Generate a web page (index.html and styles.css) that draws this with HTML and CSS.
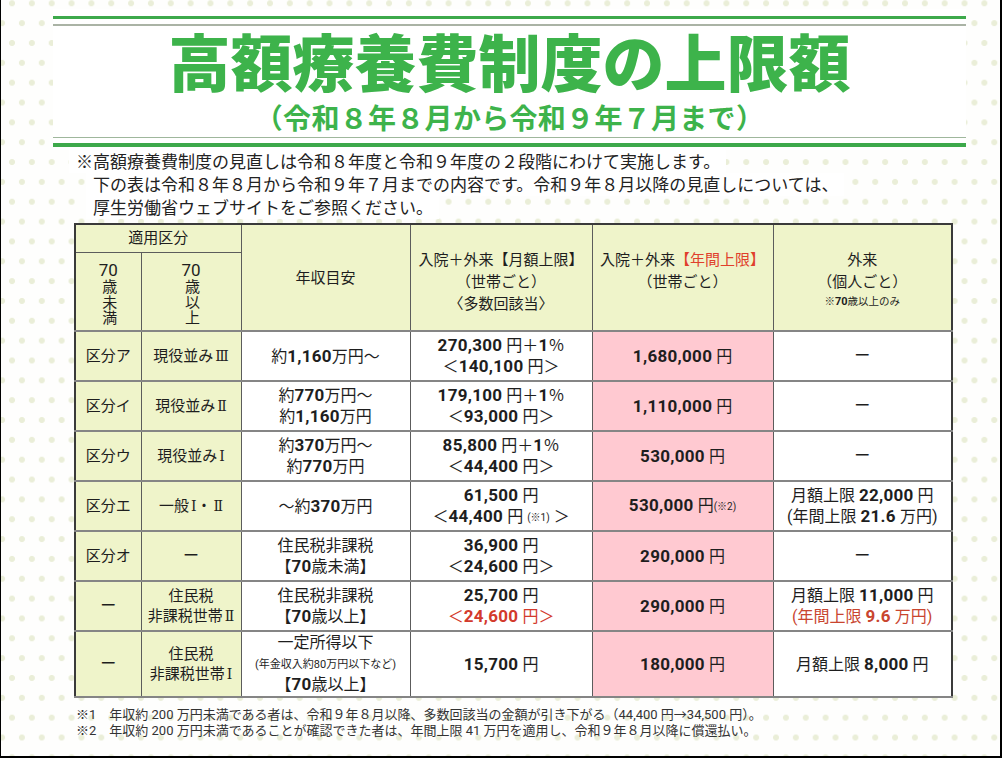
FILE: index.html
```html
<!DOCTYPE html>
<html lang="ja">
<head>
<meta charset="utf-8">
<title>高額療養費制度の上限額</title>
<link rel="stylesheet" href="styles.css">
</head>
<body>
<div class="page">
  <header class="banner">
    <div class="rule rule-green3"></div>
    <div class="rule rule-gray2"></div>
    <h1 class="title">高額療養費制度の上限額</h1>
    <p class="subtitle">（令和８年８月から令和９年７月まで）</p>
    <div class="rule rule-gray1"></div>
    <div class="rule rule-green4"></div>
  </header>

  <div class="intro">
    <p class="intro-line first">※高額療養費制度の見直しは令和８年度と令和９年度の２段階にわけて実施します。</p>
    <p class="intro-line">下の表は令和８年８月から令和９年７月までの内容です。令和９年８月以降の見直しについては、</p>
    <p class="intro-line">厚生労働省ウェブサイトをご参照ください。</p>
  </div>

  <table class="limits">
    <colgroup>
      <col class="c1"><col class="c2"><col class="c3"><col class="c4"><col class="c5"><col class="c6">
    </colgroup>
    <thead>
      <tr class="h1row">
        <th class="y" colspan="2">適用区分</th>
        <th class="y mid" rowspan="2">年収目安</th>
        <th class="y top" rowspan="2">入院＋外来【月額上限】<br>（世帯ごと）<br>〈多数回該当〉</th>
        <th class="y top" rowspan="2">入院＋外来<span class="red-h">【年間上限】</span><br>（世帯ごと）</th>
        <th class="y top" rowspan="2">外来<br>（個人ごと）<br><span class="tiny">※<b>70</b>歳以上のみ</span></th>
      </tr>
      <tr class="h2row">
        <th class="y vert"><span class="v70">70</span><span class="vtext">歳未満</span></th>
        <th class="y vert"><span class="v70">70</span><span class="vtext">歳以上</span></th>
      </tr>
    </thead>
    <tbody>
      <tr class="row">
        <td class="y k">区分ア</td>
        <td class="y k">現役並み<span class="rn">Ⅲ</span></td>
        <td>約<b class="n">1,160</b>万円～</td>
        <td><b class="n">270,300</b> 円＋<b class="n">1</b>％<br>＜<b class="n">140,100</b> 円＞</td>
        <td class="p"><b class="n">1,680,000</b> 円</td>
        <td><span class="dash">ー</span></td>
      </tr>
      <tr class="row">
        <td class="y k">区分イ</td>
        <td class="y k">現役並み<span class="rn">Ⅱ</span></td>
        <td>約<b class="n">770</b>万円～<br>約<b class="n">1,160</b>万円</td>
        <td><b class="n">179,100</b> 円＋<b class="n">1</b>％<br>＜<b class="n">93,000</b> 円＞</td>
        <td class="p"><b class="n">1,110,000</b> 円</td>
        <td><span class="dash">ー</span></td>
      </tr>
      <tr class="row">
        <td class="y k">区分ウ</td>
        <td class="y k">現役並み<span class="rn">Ⅰ</span></td>
        <td>約<b class="n">370</b>万円～<br>約<b class="n">770</b>万円</td>
        <td><b class="n">85,800</b> 円＋<b class="n">1</b>％<br>＜<b class="n">44,400</b> 円＞</td>
        <td class="p"><b class="n">530,000</b> 円</td>
        <td><span class="dash">ー</span></td>
      </tr>
      <tr class="row">
        <td class="y k">区分エ</td>
        <td class="y k">一般<span class="rn">Ⅰ</span>・<span class="rn">Ⅱ</span></td>
        <td>～約<b class="n">370</b>万円</td>
        <td><b class="n">61,500</b> 円<br>＜<b class="n">44,400</b> 円 <span class="mark">(※1)</span> ＞</td>
        <td class="p"><b class="n">530,000</b> 円<span class="mark">(※2)</span></td>
        <td>月額上限 <b class="n">22,000</b> 円<br>(年間上限 <b class="n">21.6</b> 万円)</td>
      </tr>
      <tr class="row">
        <td class="y k">区分オ</td>
        <td class="y k"><span class="dash">ー</span></td>
        <td>住民税非課税<br>【<b class="n">70</b>歳未満】</td>
        <td><b class="n">36,900</b> 円<br>＜<b class="n">24,600</b> 円＞</td>
        <td class="p"><b class="n">290,000</b> 円</td>
        <td><span class="dash">ー</span></td>
      </tr>
      <tr class="row">
        <td class="y k"><span class="dash">ー</span></td>
        <td class="y k">住民税<br>非課税世帯<span class="rn">Ⅱ</span></td>
        <td>住民税非課税<br>【<b class="n">70</b>歳以上】</td>
        <td><b class="n">25,700</b> 円<br><span class="red">＜<b class="n">24,600</b> 円＞</span></td>
        <td class="p"><b class="n">290,000</b> 円</td>
        <td>月額上限 <b class="n">11,000</b> 円<br><span class="red2">(年間上限 <b class="n">9.6</b> 万円)</span></td>
      </tr>
      <tr class="row last">
        <td class="y k"><span class="dash">ー</span></td>
        <td class="y k">住民税<br>非課税世帯<span class="rn">Ⅰ</span></td>
        <td>一定所得以下<br><span class="small">(年金収入約80万円以下など)</span><br>【<b class="n">70</b>歳以上】</td>
        <td><b class="n">15,700</b> 円</td>
        <td class="p"><b class="n">180,000</b> 円</td>
        <td>月額上限 <b class="n">8,000</b> 円</td>
      </tr>
    </tbody>
  </table>

  <div class="notes">
    <p>※1　年収約 200 万円未満である者は、令和９年８月以降、多数回該当の金額が引き下がる（44,400 円→34,500 円）。</p>
    <p>※2　年収約 200 万円未満であることが確認できた者は、年間上限 41 万円を適用し、令和９年８月以降に償還払い。</p>
  </div>
</div>
</body>
</html>
```

FILE: styles.css
```css
* { box-sizing: border-box; }

html, body {
  margin: 0;
  padding: 0;
}

body {
  font-family: "Noto Sans CJK JP", "Noto Sans", sans-serif;
  color: #1e1e1e;
  background: #ffffff;
}

.page {
  width: 1002px;
  height: 758px;
  border-left: 1px solid #000;
  border-right: 2px solid #000;
  border-bottom: 2px solid #000;
  padding-top: 9px;
  overflow: hidden;
  background-color: #fefefd;
  background-image:
    radial-gradient(circle, #eaeed8 2.7px, rgba(234,238,216,0) 3.3px),
    radial-gradient(circle, #eaeed8 2.7px, rgba(234,238,216,0) 3.3px);
  background-size: 19.85px 39.7px;
  background-position: 1.1px -16.55px, -8.85px 3.3px;
}

/* ---------- banner ---------- */
.banner {
  margin-left: 52px;
  width: 913px;
  background: #ffffff;
  padding: 7px 0 3px;
  font-family: "Roboto", "Noto Sans CJK JP", sans-serif;
}

.rule { width: 100%; }
.rule-green3 { height: 3px; background: #3da94b; }
.rule-gray2 { height: 2px; background: #aab3a5; margin-top: 5px; }
.rule-gray1 { height: 1px; background: #9fb79c; }
.rule-green4 { height: 4px; background: #3da94b; margin-top: 5px; }

.title {
  margin: 6px 0 0;
  font-size: 62px;
  line-height: 68px;
  font-weight: 900;
  color: #3db34b;
  text-align: center;
}

.subtitle {
  margin: 3px 0 0;
  font-size: 28px;
  line-height: 34px;
  font-weight: 700;
  color: #3db34b;
  text-align: center;
  letter-spacing: 0.3px;
}

/* ---------- intro ---------- */
.intro {
  padding-left: 68px;
  font-family: "Roboto", "Noto Sans CJK JP", sans-serif;
}

.intro-line {
  margin: 0 0 0 17px;
  width: fit-content;
  background: #ffffff;
  padding: 1px 6px 0 7px;
  font-size: 17px;
  line-height: 22px;
  height: 23px;
  color: #222;
  white-space: nowrap;
}

.intro-line.first { margin-left: 0; }

/* ---------- table ---------- */
.limits {
  margin: 4px 0 0 73px;
  width: 877px;
  border-collapse: collapse;
  table-layout: fixed;
  border: 2px solid #3a3a3a;
  background: #ffffff;
  font-family: "Roboto", "Noto Sans CJK JP", sans-serif;
}

.c1 { width: 66px; }
.c2 { width: 100px; }
.c3 { width: 169px; }
.c4 { width: 182px; }
.c5 { width: 181px; }
.c6 { width: 179px; }

.limits th,
.limits td {
  border: 1px solid #5c5c5c;
  padding: 0;
  text-align: center;
  vertical-align: middle;
  font-weight: 400;
  font-size: 16px;
  line-height: 20px;
  color: #1e1e1e;
  white-space: nowrap;
}

.limits th { font-size: 15px; }
.limits td.k { font-size: 15px; }

.limits tbody td { border-top: 2px solid #858585; border-bottom: 2px solid #858585; }

.h1row { height: 28px; }
.h2row { height: 79px; }
.row { height: 50px; }
.row.last { height: 66px; }

.y { background: #eff4ca; }
.p { background: #ffc9d1; }

.limits th.top {
  vertical-align: top;
  padding-top: 24px;
  line-height: 22px;
}

.limits th.vert {
  vertical-align: top;
  padding-top: 8px;
  line-height: 17px;
}

.vert span { display: block; }
.vert .v70 { font-size: 17px; line-height: 18px; }
.vert .vtext {
  display: inline-block;
  writing-mode: vertical-rl;
  text-orientation: upright;
  line-height: 16px;
  letter-spacing: 0.5px;
  font-size: 15px;
}

.rn {
  font-family: "DejaVu Serif", "Noto Sans CJK JP", serif;
  font-size: 14px;
  padding-left: 2px;
}

.tiny {
  display: inline-block;
  font-size: 10.5px;
  line-height: 18px;
  vertical-align: top;
}
.tiny b { font-weight: 700; font-size: 11px; }

.red-h { color: #e0402c; }

.n {
  font-weight: 700;
  font-size: 17px;
  letter-spacing: 0.3px;
}

.dash { font-weight: 400; font-size: 16px; }

.mark {
  font-size: 10px;
  vertical-align: 1px;
}

.small {
  font-size: 11px;
  line-height: 18px;
}

.red { color: #d33a2c; }
.red2 { color: #c9452f; }

/* ---------- notes ---------- */
.notes {
  margin: 9px 0 0 75px;
  font-family: "Roboto", "Noto Sans CJK JP", sans-serif;
}

.notes p {
  margin: 0;
  font-size: 13px;
  line-height: 16px;
  color: #333;
  white-space: nowrap;
}
```
